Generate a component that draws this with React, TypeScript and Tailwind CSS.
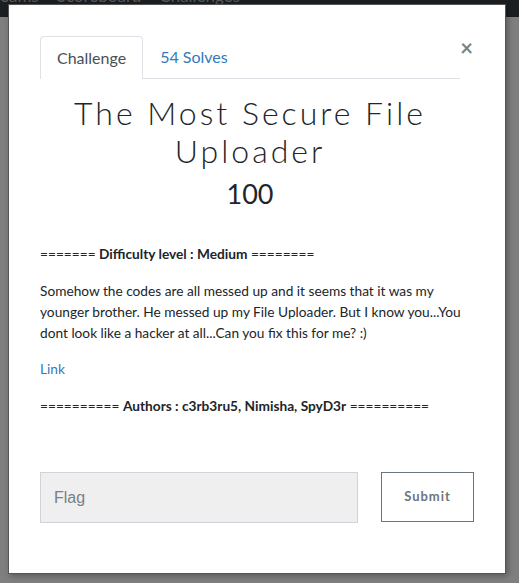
export default function App() {
    return <div className="relative w-[519px] h-[583px] overflow-hidden bg-[#7f7f7f] font-['Lato','Liberation_Sans',sans-serif]">
        <div className="h-[31px] bg-[#1b1f22] flex gap-[18px] text-[17px] text-[#55595d] -mt-[14px] leading-[20px] -ml-[8px]">
            <span>Teams</span>
            <span>Scoreboard</span>
            <span>Challenges</span>
        </div>

        {/* modal */}
        <div className="absolute left-[8px] top-[4px] w-[498px] h-[570px] bg-white border border-[#555] shadow-[2px_2px_6px_rgba(0,0,0,0.3)]">
            <div className="pl-[31px] pr-[45px] pt-[31px]">
                <div className="flex items-end relative">
                    <div className="flex-1 flex border-b border-[#dee2e6] h-[43px]">
                        <div className="px-[16px] flex items-center border border-b-0 border-[#dee2e6] rounded-t-[4px] bg-white -mb-px text-[16px] text-[#495057]">
                            Challenge
                        </div>
                        <div className="px-[17px] flex items-center text-[16px] text-[#337ab7]">
                            54 Solves
                        </div>
                    </div>
                    <button className="absolute right-[-13px] top-[1px] text-[22px] leading-none text-[#808080] font-bold">×</button>
                </div>

                <h2 className="mt-[15px] text-center text-[32px] leading-[38px] font-light tracking-[3px] text-[#212529]">
                    The Most Secure File Uploader
                </h2>
                <div className="text-center text-[27px] leading-[30px] text-[#212529] mt-[9px]">100</div>

                <div className="mt-[34px] -mr-[14px] text-[13.7px] text-[#212529] leading-[21px]">
                    <p>======= <b>Difficulty level : Medium</b> ========</p>
                    <p className="mt-[16px]">
                        Somehow the codes are all messed up and it seems that it was my younger brother. He messed up my File Uploader. But I know you...You dont look like a hacker at all...Can you fix this for me? :)
                    </p>
                    <p className="mt-[15px]"><a className="text-[#337ab7]">Link</a></p>
                    <p className="mt-[16px]">========== <b>Authors : c3rb3ru5, Nimisha, SpyD3r</b> ==========</p>
                </div>

                <div className="mt-[56px] flex gap-[23px] -mr-[14px]">
                    <input
                        className="w-[318px] h-[51px] bg-[#efefef] border border-[#cfd4da] px-[13px] text-[16px] font-['Liberation_Sans',sans-serif] placeholder:text-[#7a8086] outline-none"
                        placeholder="Flag"
                    />
                    <button className="w-[93px] h-[50px] border border-[#6c757d] bg-white text-[13px] font-bold tracking-[1px] text-[#6c757d]">
                        Submit
                    </button>
                </div>
            </div>
        </div>
    </div>
}
